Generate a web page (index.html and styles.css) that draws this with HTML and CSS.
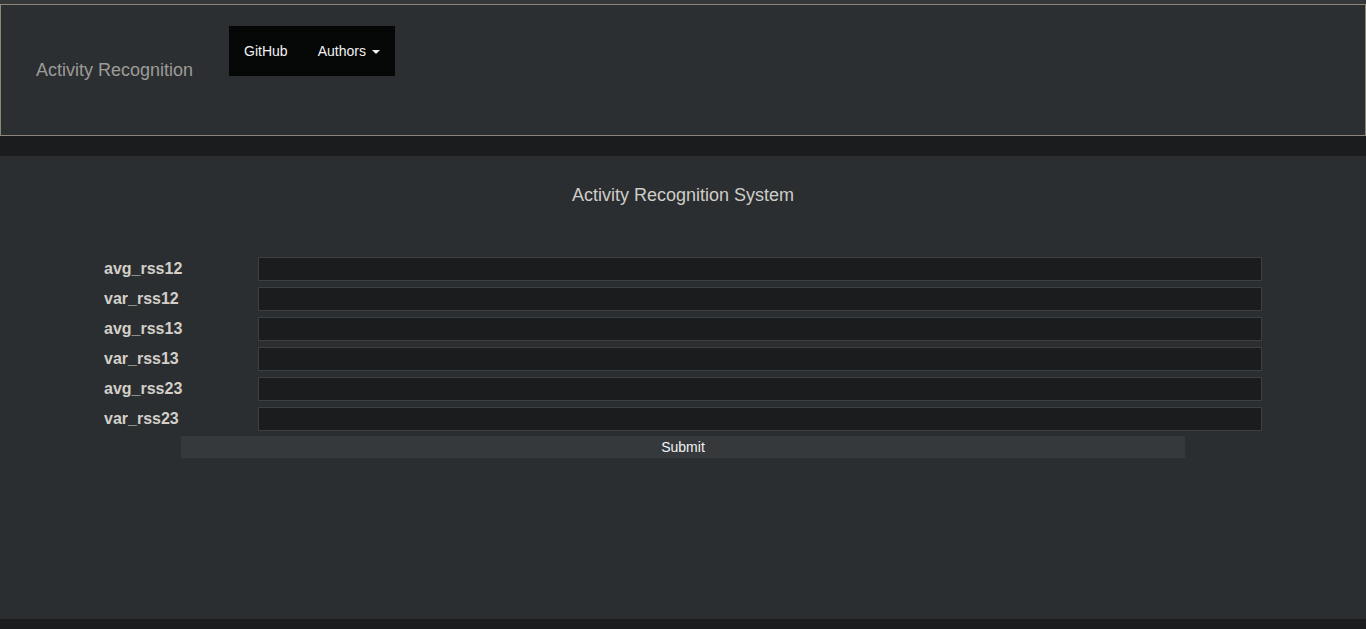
FILE: index.html
```html
<!DOCTYPE html>
<html lang="en">
<head>
<meta charset="utf-8">
<title>Activity Recognition</title>
<link rel="stylesheet" href="styles.css">
</head>
<body>
<div class="top">
  <nav class="navbar">
    <span class="brand">Activity Recognition</span>
    <ul class="nav">
      <li><a href="#">GitHub</a></li>
      <li><a href="#">Authors <span class="caret"></span></a></li>
    </ul>
  </nav>
</div>
<main class="panel">
  <h1 class="title">Activity Recognition System</h1>
  <form class="form">
    <div class="grid">
      <label class="lbl" for="f1">avg_rss12</label><input class="inp" id="f1" type="text">
      <label class="lbl" for="f2">var_rss12</label><input class="inp" id="f2" type="text">
      <label class="lbl" for="f3">avg_rss13</label><input class="inp" id="f3" type="text">
      <label class="lbl" for="f4">var_rss13</label><input class="inp" id="f4" type="text">
      <label class="lbl" for="f5">avg_rss23</label><input class="inp" id="f5" type="text">
      <label class="lbl" for="f6">var_rss23</label><input class="inp" id="f6" type="text">
    </div>
    <button class="submit" type="submit">Submit</button>
  </form>
</main>
</body>
</html>
```
FILE: styles.css
```css
html, body {
  margin: 0;
  padding: 0;
}
body {
  background: #1b1c1e;
  font-family: "Liberation Sans", Arial, sans-serif;
  height: 629px;
  overflow: hidden;
}
.top {
  background: #35383b;
  padding-top: 4px;
  padding-bottom: 0;
}
.navbar {
  box-sizing: border-box;
  height: 132px;
  border: 1px solid #8c8578;
  background: #2c2f32;
  display: flex;
  align-items: flex-start;
  padding-left: 35px;
}
.brand {
  margin-top: 55px;
  font-size: 18px;
  line-height: 20px;
  color: #9d9b97;
}
.nav {
  list-style: none;
  margin: 21px 0 0 36px;
  padding: 0;
  display: flex;
  background: #050606;
  height: 50px;
}
.nav li a {
  display: block;
  padding: 15px;
  font-size: 14px;
  line-height: 20px;
  color: #f2f2f2;
  text-decoration: none;
}
.caret {
  display: inline-block;
  width: 0;
  height: 0;
  margin-left: 2px;
  vertical-align: middle;
  border-top: 4px solid #f2f2f2;
  border-left: 4px solid transparent;
  border-right: 4px solid transparent;
}
.panel {
  margin-top: 20px;
  height: 463px;
  background: #2b2e31;
  padding-top: 29px;
  box-sizing: border-box;
}
.title {
  margin: 0;
  text-align: center;
  font-size: 18px;
  line-height: 20px;
  font-weight: normal;
  color: #cfcdc8;
}
.form {
  width: 1158px;
  margin: 52px auto 0;
  display: flex;
  flex-direction: column;
  align-items: center;
}
.grid {
  display: grid;
  grid-template-columns: 154px 1004px;
  row-gap: 6px;
  width: 100%;
}
.lbl {
  align-self: center;
  font-size: 16px;
  font-weight: bold;
  color: #d3d0c9;
  line-height: 20px;
}
.inp {
  box-sizing: border-box;
  height: 24px;
  margin: 0;
  background: #1b1c1e;
  border: 1px solid #3d4043;
  color: #ddd;
  padding: 0 4px;
  outline: none;
}
.submit {
  margin-top: 5px;
  width: 1004px;
  height: 22px;
  border: none;
  background: #35393c;
  color: #f2f2f2;
  font-family: "Liberation Sans", Arial, sans-serif;
  font-size: 14px;
  padding: 0;
}
```
